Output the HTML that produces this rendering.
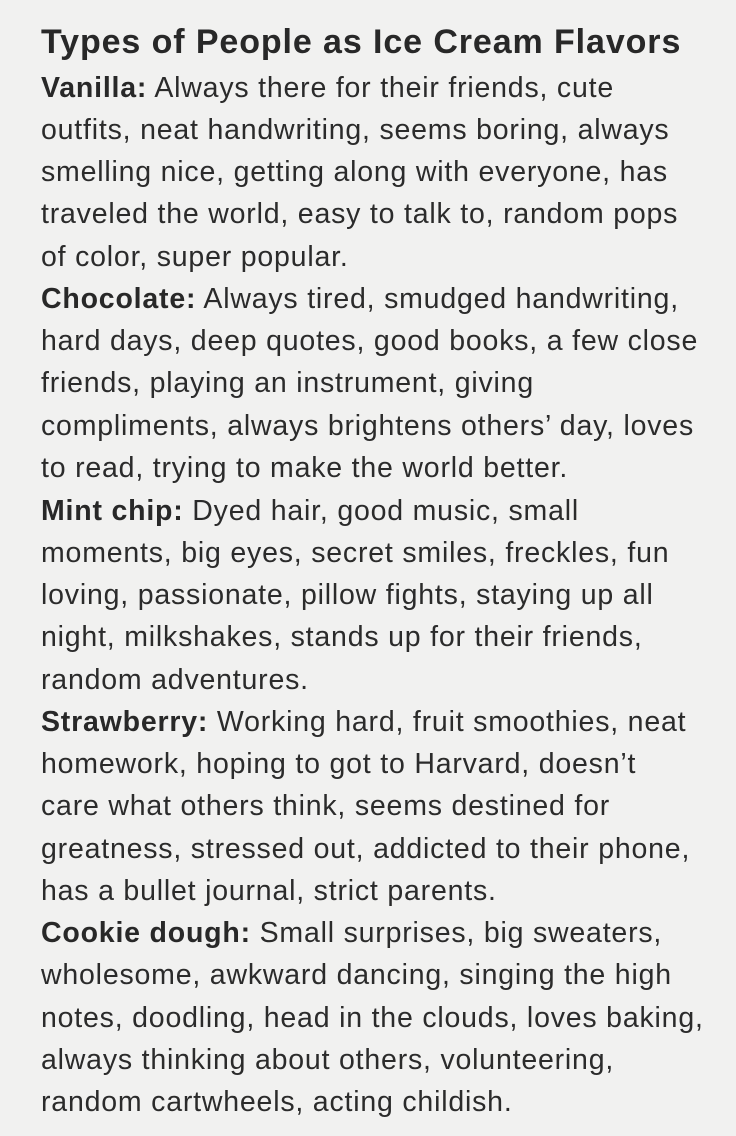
<!DOCTYPE html>
<html><head><meta charset="utf-8"><style>
html,body{margin:0;padding:0}
body{width:736px;height:1136px;background:#f1f1f0;position:relative;overflow:hidden;font-family:"Liberation Sans",sans-serif;color:#2b2b2b}
.l{position:absolute;left:41px;white-space:nowrap;font-size:28.5px;letter-spacing:0.8px;line-height:42px;height:42px}
.t{position:absolute;left:41px;top:21px;font-size:34px;letter-spacing:0.9px;font-weight:bold;line-height:42px;white-space:nowrap;color:#282828}
b{font-weight:bold;color:#282828}
</style></head><body>
<div class="t">Types of People as Ice Cream Flavors</div>
<div class="l" style="top:67px"><b>Vanilla:</b> Always there for their friends, cute</div>
<div class="l" style="top:109px">outfits, neat handwriting, seems boring, always</div>
<div class="l" style="top:151px">smelling nice, getting along with everyone, has</div>
<div class="l" style="top:193px">traveled the world, easy to talk to, random pops</div>
<div class="l" style="top:236px">of color, super popular.</div>
<div class="l" style="top:278px"><b>Chocolate:</b> Always tired, smudged handwriting,</div>
<div class="l" style="top:320px">hard days, deep quotes, good books, a few close</div>
<div class="l" style="top:362px">friends, playing an instrument, giving</div>
<div class="l" style="top:405px">compliments, always brightens others’ day, loves</div>
<div class="l" style="top:447px">to read, trying to make the world better.</div>
<div class="l" style="top:490px"><b>Mint chip:</b> Dyed hair, good music, small</div>
<div class="l" style="top:532px">moments, big eyes, secret smiles, freckles, fun</div>
<div class="l" style="top:574px">loving, passionate, pillow fights, staying up all</div>
<div class="l" style="top:616px">night, milkshakes, stands up for their friends,</div>
<div class="l" style="top:659px">random adventures.</div>
<div class="l" style="top:701px"><b>Strawberry:</b> Working hard, fruit smoothies, neat</div>
<div class="l" style="top:743px">homework, hoping to got to Harvard, doesn’t</div>
<div class="l" style="top:785px">care what others think, seems destined for</div>
<div class="l" style="top:828px">greatness, stressed out, addicted to their phone,</div>
<div class="l" style="top:870px">has a bullet journal, strict parents.</div>
<div class="l" style="top:912px"><b>Cookie dough:</b> Small surprises, big sweaters,</div>
<div class="l" style="top:954px">wholesome, awkward dancing, singing the high</div>
<div class="l" style="top:997px">notes, doodling, head in the clouds, loves baking,</div>
<div class="l" style="top:1039px">always thinking about others, volunteering,</div>
<div class="l" style="top:1081px">random cartwheels, acting childish.</div>
</body></html>
